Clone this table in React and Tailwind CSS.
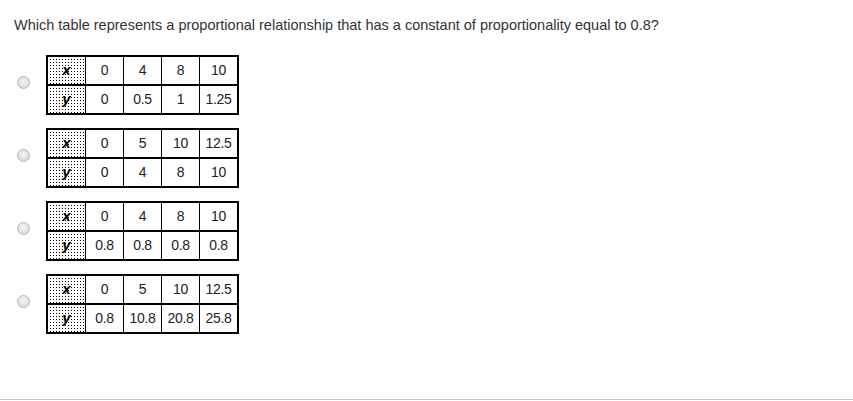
import React from "react";

const tables = [
  { x: ["0", "4", "8", "10"], y: ["0", "0.5", "1", "1.25"] },
  { x: ["0", "5", "10", "12.5"], y: ["0", "4", "8", "10"] },
  { x: ["0", "4", "8", "10"], y: ["0.8", "0.8", "0.8", "0.8"] },
  { x: ["0", "5", "10", "12.5"], y: ["0.8", "10.8", "20.8", "25.8"] },
];

const Row = ({ label, values, top }) => (
  <div className={`flex ${top ? "h-[29px] border-b-2 border-black" : "h-[27px]"}`}>
    <div className="w-[37px] flex items-center justify-center bg-[radial-gradient(circle,#000_0.5px,transparent_0.8px)] bg-[length:3px_3px] bg-[position:1px_1px]">
      <span className="font-['Liberation_Sans'] font-bold italic text-[15px] text-black">{label}</span>
    </div>
    {values.map((v, i) => (
      <div
        key={i}
        className="w-[38px] border-l border-black flex items-center justify-center text-[14px] text-[#222] tracking-[-0.3px]"
      >
        {v}
      </div>
    ))}
  </div>
);

const Option = ({ data }) => (
  <div className="flex items-center">
    <div className="ml-[17px] mr-[16px] -mt-[5px] w-[13px] h-[13px] rounded-full border border-[#b5b5b5] bg-[radial-gradient(circle_at_50%_40%,#f4f4f4,#d4d4d4)]" />
    <div className="border-2 border-black w-[193px]">
      <Row label="x" values={data.x} top />
      <Row label="y" values={data.y} />
    </div>
  </div>
);

export default function App() {
  return (
    <div className="w-[853px] h-[401px] bg-white flex flex-col font-['Liberation_Sans',Arial,sans-serif]">
      <p className="pl-[14px] pt-[17px] text-[14.5px] leading-[17px] text-[#333]">
        Which table represents a proportional relationship that has a constant of proportionality equal to 0.8?
      </p>
      <div className="mt-[21px] flex flex-col gap-[13px]">
        {tables.map((t, i) => (
          <Option key={i} data={t} />
        ))}
      </div>
      <div className="mt-auto mb-px h-px bg-[#c8c8c8]" />
    </div>
  );
}
